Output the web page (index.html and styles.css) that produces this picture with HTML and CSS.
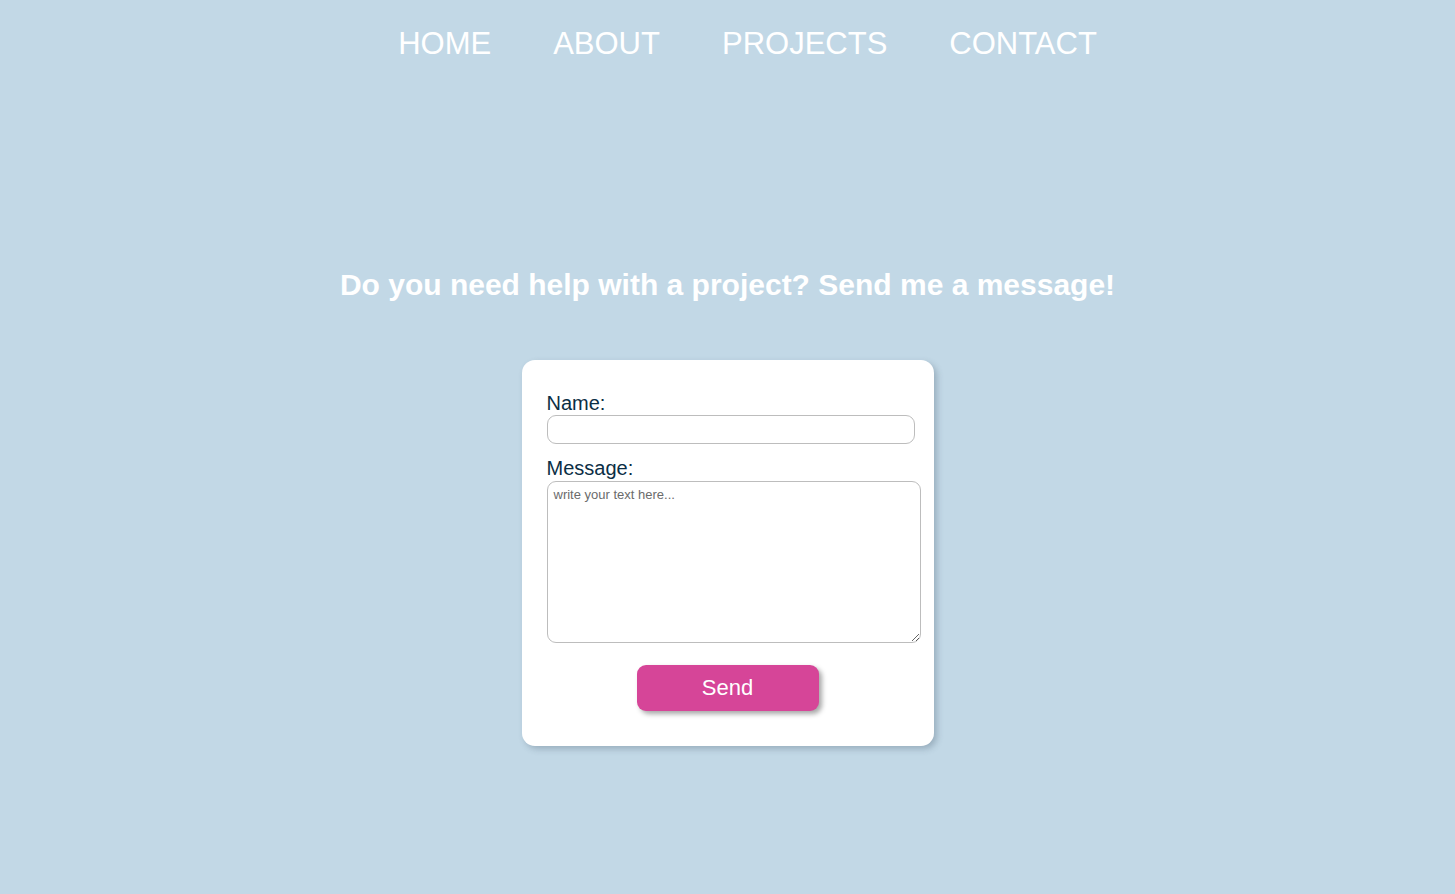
FILE: index.html
```html
<!DOCTYPE html>
<html lang="en">
<head>
<meta charset="utf-8">
<title>Contact</title>
<link rel="stylesheet" href="styles.css">
</head>
<body>
<nav class="nav">
  <ul class="nav-list">
    <li><a class="nav-link" href="#">HOME</a></li>
    <li><a class="nav-link" href="#">ABOUT</a></li>
    <li><a class="nav-link" href="#">PROJECTS</a></li>
    <li><a class="nav-link" href="#">CONTACT</a></li>
  </ul>
</nav>
<main class="main">
  <h1 class="title">Do you need help with a project? Send me a message!</h1>
  <form class="card">
    <label class="label" for="name">Name:</label>
    <input class="input" id="name" type="text">
    <label class="label label-msg" for="msg">Message:</label>
    <textarea class="textarea" id="msg" placeholder="write your text here..."></textarea>
    <div class="actions">
      <button class="btn" type="button">Send</button>
    </div>
  </form>
</main>
</body>
</html>
```
FILE: styles.css
```css
html, body {
  margin: 0;
  padding: 0;
}
body {
  background: #c2d8e6;
  font-family: "Liberation Sans", Arial, sans-serif;
  min-height: 894px;
}
.nav {
  padding-top: 26px;
}
.nav-list {
  list-style: none;
  margin: 0;
  padding: 0 0 0 40px;
  display: flex;
  justify-content: center;
  gap: 62px;
}
.nav-link {
  color: #ffffff;
  text-decoration: none;
  font-size: 31px;
  line-height: 35px;
  display: block;
}
.main {
  display: flex;
  flex-direction: column;
  align-items: center;
}
.title {
  margin: 207px 0 0 0;
  color: #ffffff;
  font-size: 30px;
  line-height: 34px;
  font-weight: bold;
}
.card {
  margin-top: 58px;
  width: 412px;
  box-sizing: border-box;
  background: #ffffff;
  border-radius: 13px;
  box-shadow: 3px 3px 6px rgba(60, 80, 100, 0.3);
  padding: 32px 13px 35px 25px;
  display: flex;
  flex-direction: column;
  align-items: flex-start;
}
.label {
  color: #0b2e45;
  font-size: 20px;
  line-height: 23px;
  margin-bottom: 0;
}
.label-msg {
  margin-top: 13px;
  margin-bottom: 1px;
}
.input {
  width: 368px;
  height: 29px;
  box-sizing: border-box;
  border: 1px solid #bdbdbd;
  border-radius: 9px;
  padding: 2px 6px;
  font-family: inherit;
  font-size: 14px;
  outline: none;
  margin: 0;
}
.textarea {
  width: 374px;
  height: 162px;
  box-sizing: border-box;
  border: 1px solid #bdbdbd;
  border-radius: 9px;
  padding: 5px 5px 5px 6px;
  font-family: inherit;
  font-size: 13px;
  resize: both;
  outline: none;
  margin: 0;
}
.textarea::placeholder {
  color: #6b6b6b;
}
.actions {
  align-self: stretch;
  display: flex;
  justify-content: center;
  margin-top: 22px;
  padding-right: 12px;
}
.btn {
  width: 182px;
  height: 46px;
  background: #d64598;
  color: #ffffff;
  border: none;
  border-radius: 9px;
  font-family: inherit;
  font-size: 22px;
  box-shadow: 3px 3px 5px rgba(0, 0, 0, 0.35);
  cursor: pointer;
}
```
